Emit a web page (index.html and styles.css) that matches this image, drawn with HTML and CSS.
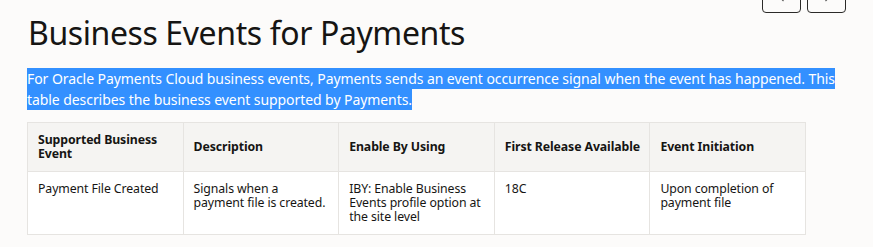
FILE: index.html
```html
<!DOCTYPE html>
<html lang="en">
<head>
<meta charset="utf-8">
<title>Business Events for Payments</title>
<link rel="stylesheet" href="styles.css">
</head>
<body>
<main class="page">
  <div class="nav">
    <button class="nav-btn" aria-label="Previous"><svg width="10" height="10" viewBox="0 0 10 10"><path d="M6.5 1 L2.5 5 L6.5 9" fill="none" stroke="#555" stroke-width="1.2"/></svg></button>
    <button class="nav-btn" aria-label="Next"><svg width="10" height="10" viewBox="0 0 10 10"><path d="M3.5 1 L7.5 5 L3.5 9" fill="none" stroke="#555" stroke-width="1.2"/></svg></button>
  </div>
  <h1 class="title">Business Events for Payments</h1>
  <p class="intro"><span class="sel">For Oracle Payments Cloud business events, Payments sends an event occurrence signal when the event has happened. This table describes the business event supported by Payments.</span></p>
  <table class="events">
    <thead>
      <tr>
        <th>Supported Business Event</th>
        <th>Description</th>
        <th>Enable By Using</th>
        <th>First Release Available</th>
        <th>Event Initiation</th>
      </tr>
    </thead>
    <tbody>
      <tr>
        <td>Payment File Created</td>
        <td>Signals when a payment file is created.</td>
        <td>IBY: Enable Business Events profile option at the site level</td>
        <td>18C</td>
        <td>Upon completion of payment file</td>
      </tr>
    </tbody>
  </table>
</main>
</body>
</html>
```
FILE: styles.css
```css
html, body {
  margin: 0;
  padding: 0;
  background: #fcfbfa;
}
body {
  font-family: "Noto Sans", "Open Sans", sans-serif;
  color: #161513;
  overflow: hidden;
}
.page {
  width: 819px;
  padding-left: 27px;
}
.nav {
  display: flex;
  justify-content: flex-end;
  gap: 6px;
  margin-top: -17px;
  height: 30px;
}
.nav-btn {
  width: 39px;
  height: 30px;
  box-sizing: border-box;
  border: 1px solid #2b2a28;
  border-radius: 4px;
  background: #fcfbfa;
  padding: 0;
  display: flex;
  align-items: flex-start;
  justify-content: center;
}
.nav-btn svg {
  margin-top: 8px;
}
.title {
  margin: 0 0 0 1px;
  font-weight: 400;
  font-size: 32px;
  line-height: 40px;
  letter-spacing: -0.4px;
}
.intro {
  margin: 15px 0 12px;
  font-size: 14px;
  line-height: 21px;
  letter-spacing: -0.07px;
}
.sel {
  background: #3390ff;
  color: #fff;
  padding: 1px 0;
}
.events {
  width: 779px;
  table-layout: fixed;
  border-collapse: collapse;
  font-size: 12.3px;
  line-height: 14px;
  letter-spacing: -0.1px;
}
.events th, .events td {
  border: 1px solid #e6e4e1;
  padding: 10px 8px 10px 10px;
  text-align: left;
}
.events th {
  background: #f5f4f2;
  font-weight: 700;
  vertical-align: middle;
}
.events td {
  background: #fff;
  vertical-align: top;
}
```
